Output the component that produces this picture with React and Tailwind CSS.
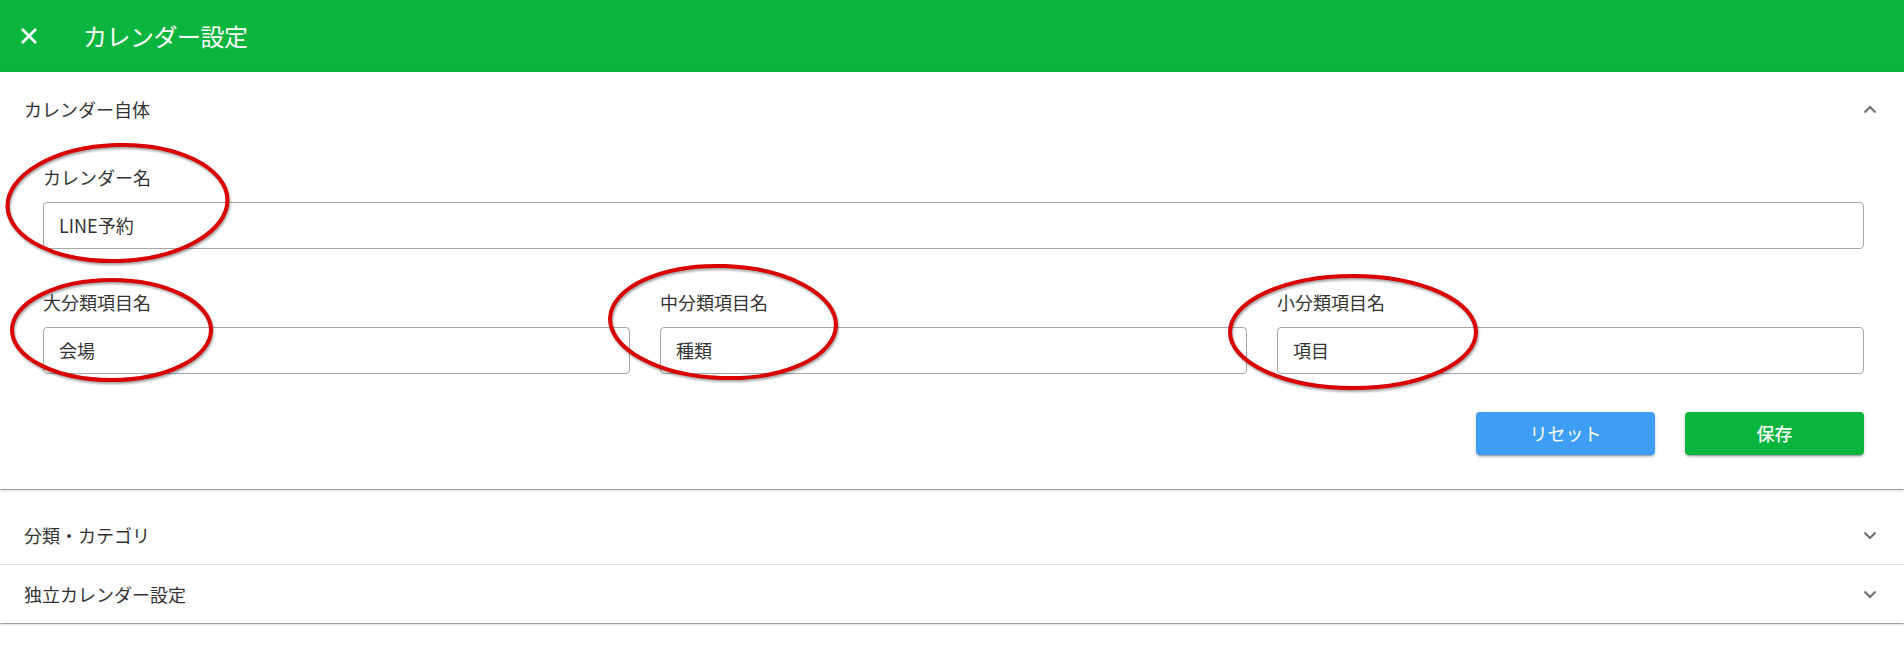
import React from "react";

const Chevron = ({ up }) => (
  <svg width="14" height="9" viewBox="0 0 14 9" className="text-[#6e6e6e]">
    <polyline
      points={up ? "1.5,7.5 7,2 12.5,7.5" : "1.5,1.5 7,7 12.5,1.5"}
      fill="none"
      stroke="currentColor"
      strokeWidth="2"
    />
  </svg>
);

const Field = ({ label, value }) => (
  <div className="flex-1 min-w-0">
    <div className="text-[18px] leading-[26px] text-[#333] mb-[12px]">{label}</div>
    <div className="h-[47px] flex items-center pl-[15px] border border-[#a6a6a6] rounded-[4px] text-[18px] text-[#333]">
      {value}
    </div>
  </div>
);

export default function App() {
  return (
    <div className="relative min-h-[654px] bg-white font-['Noto_Sans_CJK_JP','Noto_Sans',sans-serif]">
      {/* Header */}
      <div className="h-[72px] bg-[#09b53c] flex items-center text-white">
        <svg width="18" height="18" viewBox="0 0 18 18" className="ml-[20px]">
          <path d="M2 2 L16 16 M16 2 L2 16" stroke="white" strokeWidth="2.8" />
        </svg>
        <h1 className="ml-[45px] text-[24px] font-normal tracking-[-0.5px]">カレンダー設定</h1>
      </div>

      {/* カレンダー自体 */}
      <div className="bg-white shadow-[0_2px_1px_-1px_rgba(0,0,0,0.2),0_1px_1px_0_rgba(0,0,0,0.14),0_1px_3px_0_rgba(0,0,0,0.12)]">
        <div className="h-[74px] flex items-center justify-between pl-[24px] pr-[27px]">
          <span className="text-[18px] text-[#333]">カレンダー自体</span>
          <Chevron up />
        </div>
        <div className="pl-[43px] pr-[40px] pt-[18px] pb-[34px]">
          <Field label="カレンダー名" value="LINE予約" />
          <div className="flex gap-[30px] mt-[40px]">
            <Field label="大分類項目名" value="会場" />
            <Field label="中分類項目名" value="種類" />
            <Field label="小分類項目名" value="項目" />
          </div>
          <div className="flex justify-end gap-[30px] mt-[38px]">
            <button className="w-[179px] h-[43px] rounded-[4px] bg-[#3d9ef3] text-white text-[18px] shadow-[0_3px_1px_-2px_rgba(0,0,0,0.2),0_2px_2px_0_rgba(0,0,0,0.14),0_1px_5px_0_rgba(0,0,0,0.12)]">
              リセット
            </button>
            <button className="w-[179px] h-[43px] rounded-[4px] bg-[#09b53c] text-white text-[18px] font-medium shadow-[0_3px_1px_-2px_rgba(0,0,0,0.2),0_2px_2px_0_rgba(0,0,0,0.14),0_1px_5px_0_rgba(0,0,0,0.12)]">
              保存
            </button>
          </div>
        </div>
      </div>

      {/* Collapsed sections */}
      <div className="mt-[18px] bg-white shadow-[0_2px_1px_-1px_rgba(0,0,0,0.2),0_1px_1px_0_rgba(0,0,0,0.14),0_1px_3px_0_rgba(0,0,0,0.12)]">
        <div className="h-[58px] flex items-center justify-between pl-[24px] pr-[27px] border-b border-[#e0e0e0]">
          <span className="text-[18px] text-[#333]">分類・カテゴリ</span>
          <Chevron />
        </div>
        <div className="h-[58px] flex items-center justify-between pl-[24px] pr-[27px]">
          <span className="text-[18px] text-[#333]">独立カレンダー設定</span>
          <Chevron />
        </div>
      </div>

      {/* Red annotation ellipses */}
      <svg
        width="1904"
        height="654"
        className="absolute top-0 left-0 pointer-events-none drop-shadow-[1px_2px_1px_rgba(0,0,0,0.35)]"
      >
        <g fill="none" stroke="#d90000" strokeWidth="4">
          <ellipse cx="117.5" cy="203" rx="110" ry="58" transform="rotate(-2 117.5 203)" />
          <ellipse cx="111.5" cy="330" rx="99.5" ry="50" />
          <ellipse cx="723" cy="322" rx="113" ry="56" transform="rotate(2 723 322)" />
          <ellipse cx="1353" cy="332" rx="123" ry="56" />
        </g>
      </svg>
    </div>
  );
}
